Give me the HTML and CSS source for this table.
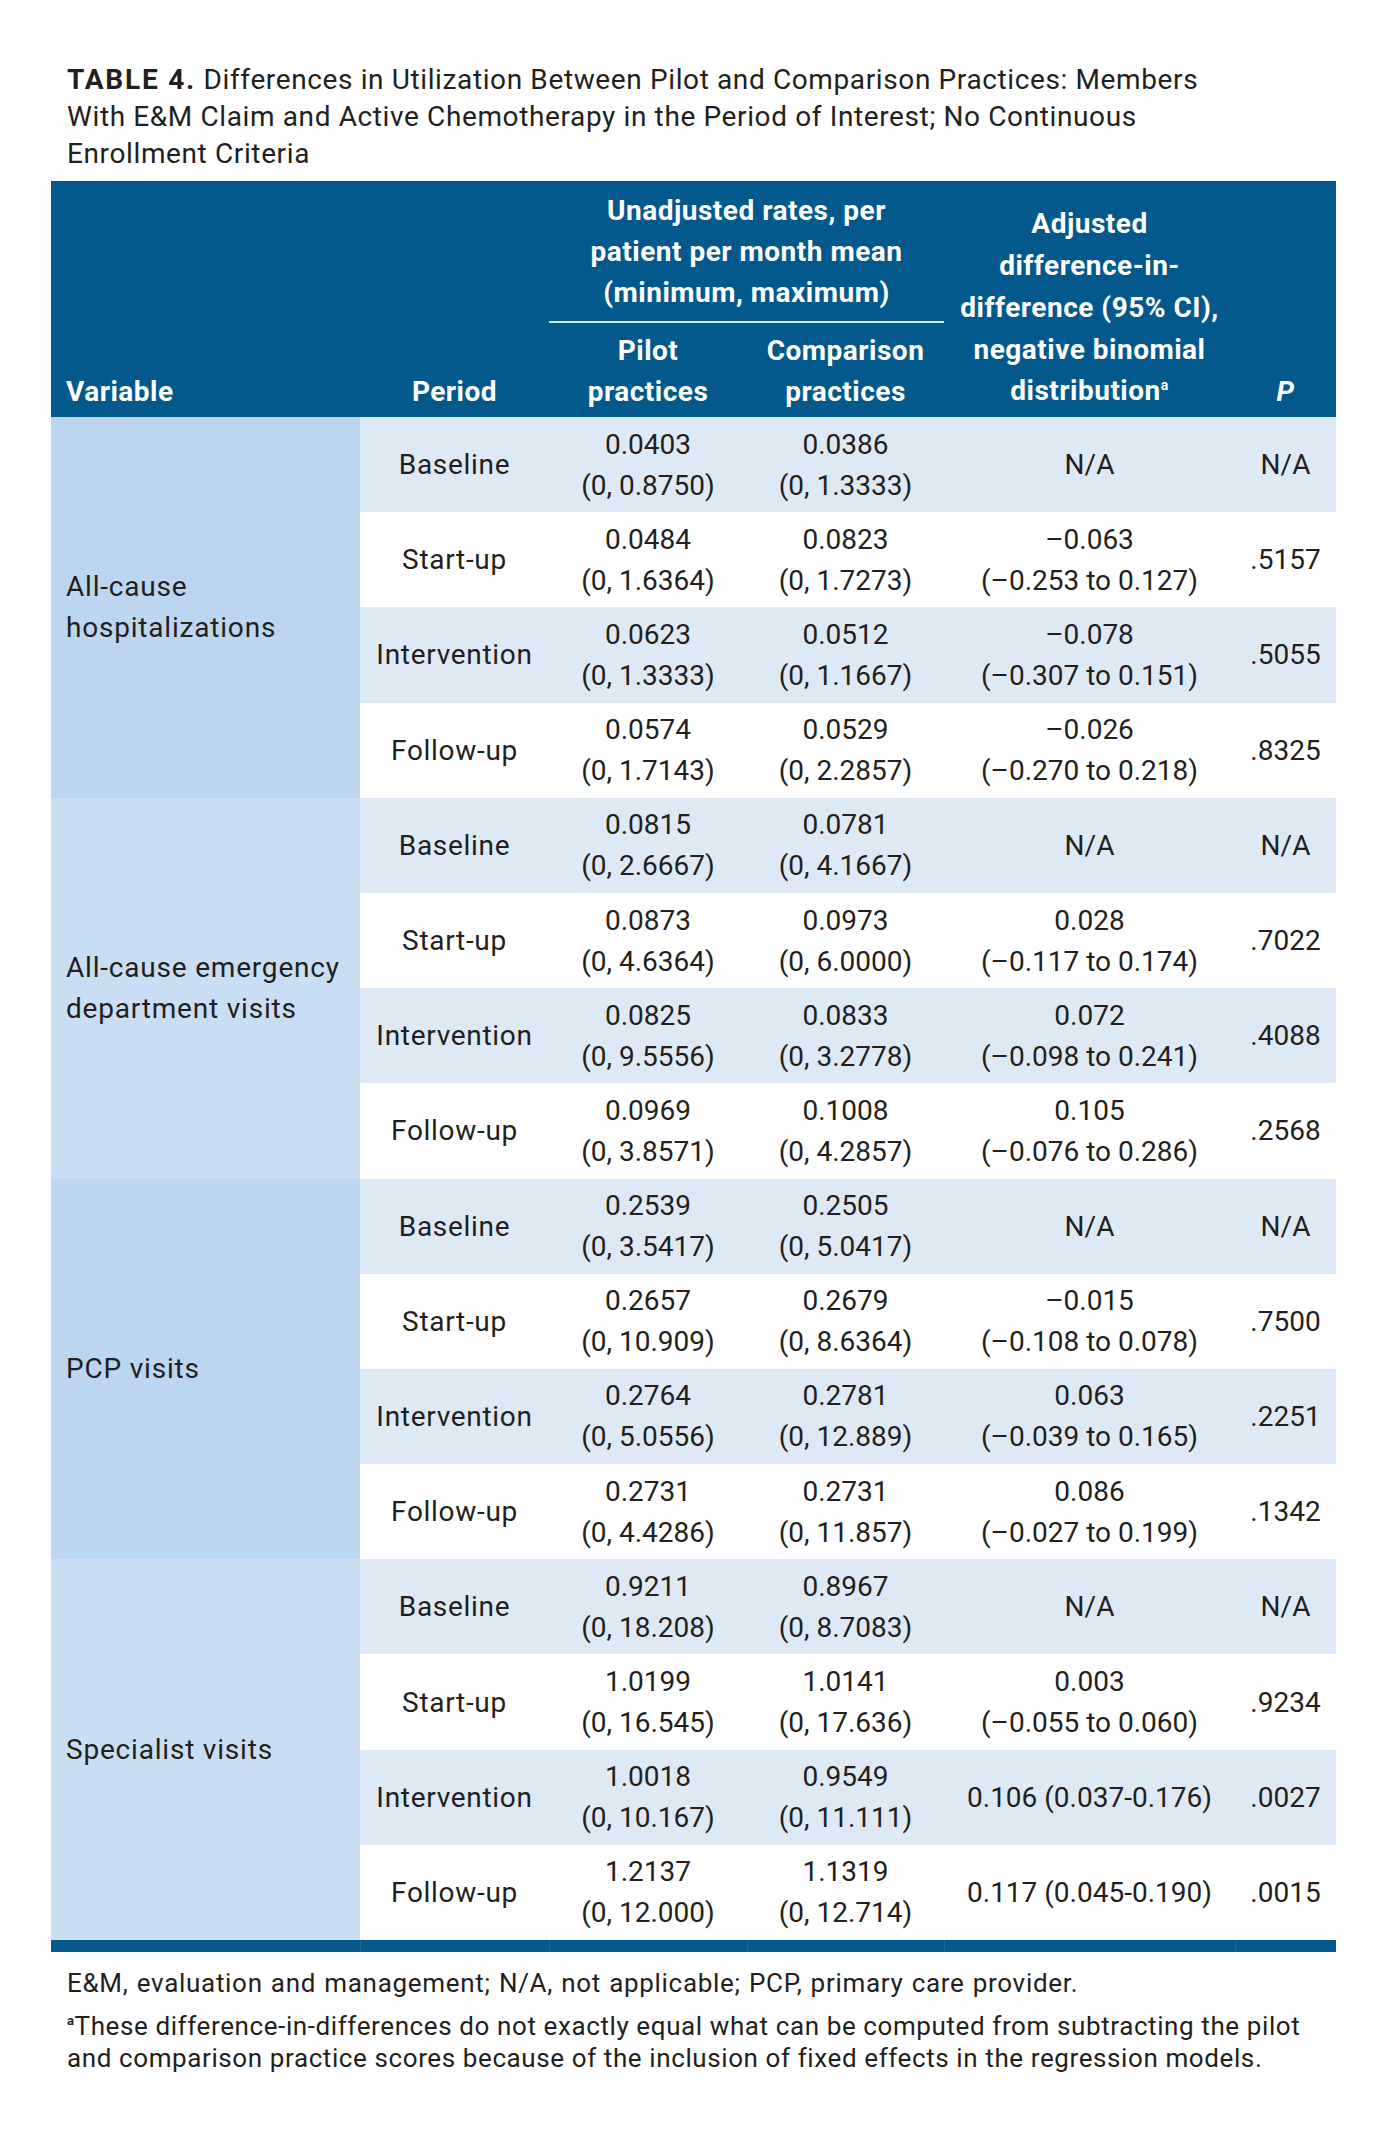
FILE: index.html
```html
<!DOCTYPE html>
<html lang="en">
<head>
<meta charset="utf-8">
<title>Table 4</title>
<link rel="stylesheet" href="styles.css">
</head>
<body>
<div class="page">
  <p class="caption"><b>TABLE 4.</b> Differences in Utilization Between Pilot and Comparison Practices: Members<br>With E&amp;M Claim and Active Chemotherapy in the Period of Interest; No Continuous<br>Enrollment Criteria</p>
  <table class="data">
    <colgroup>
      <col class="c-var"><col class="c-per"><col class="c-pil"><col class="c-com"><col class="c-adj"><col class="c-p">
    </colgroup>
    <thead>
      <tr class="h1">
        <th rowspan="2" class="th-var">Variable</th>
        <th rowspan="2">Period</th>
        <th colspan="2" class="th-span">Unadjusted rates, per<br>patient per month mean<br>(minimum, maximum)</th>
        <th rowspan="2" class="th-adj">Adjusted<br>difference-in-<br>difference (95% CI),<br>negative binomial<br>distribution<sup>a</sup></th>
        <th rowspan="2"><i>P</i></th>
      </tr>
      <tr class="h2">
        <th>Pilot<br>practices</th>
        <th>Comparison<br>practices</th>
      </tr>
    </thead>
    <tbody class="grp grp-a">
      <tr class="st"><td rowspan="4" class="var">All-cause<br>hospitalizations</td><td class="per">Baseline</td><td>0.0403<br>(0, 0.8750)</td><td>0.0386<br>(0, 1.3333)</td><td>N/A</td><td>N/A</td></tr>
      <tr><td class="per">Start-up</td><td>0.0484<br>(0, 1.6364)</td><td>0.0823<br>(0, 1.7273)</td><td>–0.063<br>(–0.253 to 0.127)</td><td>.5157</td></tr>
      <tr class="st"><td class="per">Intervention</td><td>0.0623<br>(0, 1.3333)</td><td>0.0512<br>(0, 1.1667)</td><td>–0.078<br>(–0.307 to 0.151)</td><td>.5055</td></tr>
      <tr><td class="per">Follow-up</td><td>0.0574<br>(0, 1.7143)</td><td>0.0529<br>(0, 2.2857)</td><td>–0.026<br>(–0.270 to 0.218)</td><td>.8325</td></tr>
    </tbody>
    <tbody class="grp grp-b">
      <tr class="st"><td rowspan="4" class="var">All-cause emergency<br>department visits</td><td class="per">Baseline</td><td>0.0815<br>(0, 2.6667)</td><td>0.0781<br>(0, 4.1667)</td><td>N/A</td><td>N/A</td></tr>
      <tr><td class="per">Start-up</td><td>0.0873<br>(0, 4.6364)</td><td>0.0973<br>(0, 6.0000)</td><td>0.028<br>(–0.117 to 0.174)</td><td>.7022</td></tr>
      <tr class="st"><td class="per">Intervention</td><td>0.0825<br>(0, 9.5556)</td><td>0.0833<br>(0, 3.2778)</td><td>0.072<br>(–0.098 to 0.241)</td><td>.4088</td></tr>
      <tr><td class="per">Follow-up</td><td>0.0969<br>(0, 3.8571)</td><td>0.1008<br>(0, 4.2857)</td><td>0.105<br>(–0.076 to 0.286)</td><td>.2568</td></tr>
    </tbody>
    <tbody class="grp grp-a">
      <tr class="st"><td rowspan="4" class="var">PCP visits</td><td class="per">Baseline</td><td>0.2539<br>(0, 3.5417)</td><td>0.2505<br>(0, 5.0417)</td><td>N/A</td><td>N/A</td></tr>
      <tr><td class="per">Start-up</td><td>0.2657<br>(0, 10.909)</td><td>0.2679<br>(0, 8.6364)</td><td>–0.015<br>(–0.108 to 0.078)</td><td>.7500</td></tr>
      <tr class="st"><td class="per">Intervention</td><td>0.2764<br>(0, 5.0556)</td><td>0.2781<br>(0, 12.889)</td><td>0.063<br>(–0.039 to 0.165)</td><td>.2251</td></tr>
      <tr><td class="per">Follow-up</td><td>0.2731<br>(0, 4.4286)</td><td>0.2731<br>(0, 11.857)</td><td>0.086<br>(–0.027 to 0.199)</td><td>.1342</td></tr>
    </tbody>
    <tbody class="grp grp-b">
      <tr class="st"><td rowspan="4" class="var">Specialist visits</td><td class="per">Baseline</td><td>0.9211<br>(0, 18.208)</td><td>0.8967<br>(0, 8.7083)</td><td>N/A</td><td>N/A</td></tr>
      <tr><td class="per">Start-up</td><td>1.0199<br>(0, 16.545)</td><td>1.0141<br>(0, 17.636)</td><td>0.003<br>(–0.055 to 0.060)</td><td>.9234</td></tr>
      <tr class="st"><td class="per">Intervention</td><td>1.0018<br>(0, 10.167)</td><td>0.9549<br>(0, 11.111)</td><td>0.106 (0.037-0.176)</td><td>.0027</td></tr>
      <tr><td class="per">Follow-up</td><td>1.2137<br>(0, 12.000)</td><td>1.1319<br>(0, 12.714)</td><td>0.117 (0.045-0.190)</td><td>.0015</td></tr>
    </tbody>
    <tfoot>
      <tr><td></td><td></td><td></td><td></td><td></td><td></td></tr>
    </tfoot>
  </table>
  <div class="notes">
    <p class="n1">E&amp;M, evaluation and management; N/A, not applicable; PCP, primary care provider.</p>
    <p><sup>a</sup>These difference-in-differences do not exactly equal what can be computed from subtracting the pilot<br>and comparison practice scores because of the inclusion of fixed effects in the regression models.</p>
  </div>
</div>
</body>
</html>
```

FILE: styles.css
```css
html, body {
  margin: 0;
  padding: 0;
  background: #ffffff;
}

body {
  font-family: Roboto, "Liberation Sans", sans-serif;
  color: #231f20;
}

.page {
  width: 1285px;
  padding: 61px 0 0 51px;
}

.caption {
  margin: 0 0 9px 0;
  padding-left: 16px;
  font-size: 28px;
  line-height: 37px;
  letter-spacing: 0.62px;
  white-space: nowrap;
}

.caption b {
  font-weight: 700;
  letter-spacing: 1.8px;
}

.data {
  width: 1285px;
  border-collapse: collapse;
  border-spacing: 0;
  table-layout: fixed;
  font-size: 28px;
  line-height: 41px;
}

.c-var { width: 309px; }
.c-per { width: 189px; }
.c-pil { width: 198px; }
.c-com { width: 197px; }
.c-adj { width: 291px; }
.c-p   { width: 101px; }

.data thead th {
  background: #03598c;
  color: #ffffff;
  font-weight: 700;
  letter-spacing: 0.5px;
  text-align: center;
  vertical-align: bottom;
  padding: 0 4px 5px 4px;
  white-space: nowrap;
}

.data thead .h1 th.th-var {
  text-align: left;
  padding-left: 15px;
}

.data thead .h1 th.th-adj {
  line-height: 41.7px;
}

.data thead .h1 th.th-span {
  vertical-align: top;
  height: 141px;
  box-sizing: border-box;
  padding: 9px 4px 7px 4px;
  border-bottom: 2px solid #d5e3ef;
}

.data thead .h2 th {
  height: 95px;
  box-sizing: border-box;
  padding-top: 7px;
}

.data thead sup,
.notes sup {
  font-size: 0.5em;
  line-height: 0;
  vertical-align: 0.75em;
}

.notes sup {
  font-weight: 700;
}

.data tbody td {
  height: 95.2px;
  box-sizing: border-box;
  padding: 6px 4px;
  text-align: center;
  vertical-align: middle;
  white-space: nowrap;
  background: #ffffff;
}

.data tbody td.per {
  letter-spacing: 0.7px;
}

.data tbody tr.st td {
  background: #dde9f5;
}

.data tbody td.var {
  text-align: left;
  padding-left: 15px;
  letter-spacing: 0.8px;
}

.data tbody.grp-a td.var,
.data tbody.grp-a tr.st td.var {
  background: #bcd6ef;
}

.data tbody.grp-b td.var,
.data tbody.grp-b tr.st td.var {
  background: #c9def3;
}

.data tfoot td {
  height: 12px;
  padding: 0;
  background: #03598c;
  border-left: 1px solid #1a6697;
}

.data tfoot td:first-child {
  border-left: none;
}

.notes {
  padding: 15px 0 0 16px;
  font-size: 26px;
  line-height: 32px;
  letter-spacing: 0.6px;
}

.notes p {
  margin: 0 0 11px 0;
  white-space: nowrap;
}

.notes p.n1 {
  word-spacing: 1px;
  letter-spacing: 0.7px;
}
```
